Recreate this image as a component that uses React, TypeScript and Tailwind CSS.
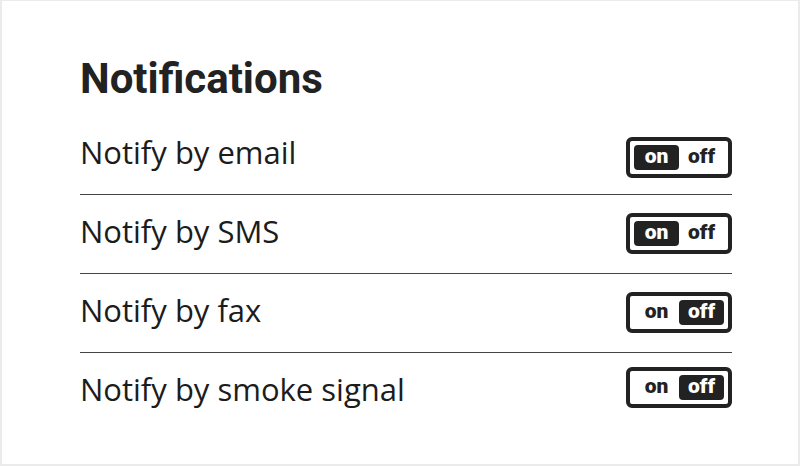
import React from "react";

type Row = { label: string; on: boolean; mt: string };

const rows: Row[] = [
  { label: "Notify by email", on: true, mt: "mt-[21px]" },
  { label: "Notify by SMS", on: true, mt: "mt-[18px]" },
  { label: "Notify by fax", on: false, mt: "mt-[18px]" },
  { label: "Notify by smoke signal", on: false, mt: "mt-[14px]" },
];

function Toggle({ on, mt }: { on: boolean; mt: string }) {
  return (
    <div
      className={`${mt} flex h-[41px] w-[106px] shrink-0 rounded-[6px] border-[4px] border-[#222222] bg-white p-[4px]`}
      style={{ fontFamily: "Roboto, 'Liberation Sans', sans-serif" }}
    >
      <div
        className={
          on
            ? "flex flex-1 items-center justify-center rounded-[4px] bg-[#222222] pb-[2px] text-[21px] font-black leading-none text-white"
            : "flex flex-1 items-center justify-center pb-[2px] text-[21px] font-black leading-none text-[#222222]"
        }
      >
        on
      </div>
      <div
        className={
          !on
            ? "flex flex-1 items-center justify-center rounded-[4px] bg-[#222222] pb-[2px] text-[21px] font-black leading-none text-white"
            : "flex flex-1 items-center justify-center pb-[2px] text-[21px] font-black leading-none text-[#222222]"
        }
      >
        off
      </div>
    </div>
  );
}

export default function App() {
  return (
    <div className="box-border h-[466px] w-[800px] border-2 border-t border-[#ebebeb] bg-white pl-[78px] pr-[66px] pt-[53px]">
      <h1
        className="m-0 text-[42px] font-bold leading-[49px] text-[#222222]"
        style={{ fontFamily: "Roboto, 'Liberation Sans', sans-serif" }}
      >
        Notifications
      </h1>
      <div className="mt-[13px]">
        {rows.map((r, i) => (
          <div
            key={r.label}
            className={
              i < rows.length - 1
                ? "flex h-[79px] justify-between border-b border-[#444444]"
                : "flex h-[79px] justify-between"
            }
          >
            <div
              className="mt-[16px] text-[31px] leading-[40px] text-[#1c1c1c]"
              style={{ fontFamily: "'Open Sans', 'Noto Sans', sans-serif" }}
            >
              {r.label}
            </div>
            <Toggle on={r.on} mt={r.mt} />
          </div>
        ))}
      </div>
    </div>
  );
}
